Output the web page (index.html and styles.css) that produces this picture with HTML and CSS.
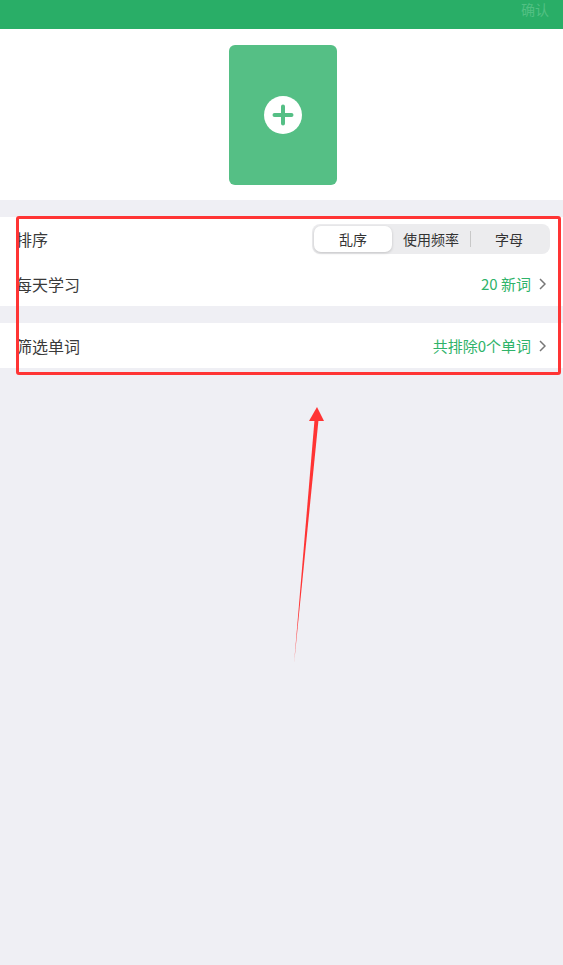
FILE: index.html
```html
<!DOCTYPE html>
<html lang="zh">
<head>
  <meta charset="UTF-8">
  <title>学习设置</title>
  <meta name="viewport" content="width=device-width, initial-scale=1">
  <link rel="stylesheet" href="styles.css">
</head>
<body>
  <header class="topbar">
    <span class="confirm">确认</span>
  </header>

  <div class="cover-area">
    <div class="cover">
      <svg class="add-icon" width="38" height="38" viewBox="0 0 38 38">
        <circle cx="19" cy="19" r="19" fill="#fff"/>
        <path d="M19 10.5v17M10.5 19h17" stroke="#55bf85" stroke-width="4" stroke-linecap="round"/>
      </svg>
    </div>
  </div>

  <div class="settings">
    <div class="group">
      <div class="row">
        <span class="label">排序</span>
        <div class="segmented">
          <span class="seg active">乱序</span>
          <span class="seg">使用频率</span>
          <span class="seg divided">字母</span>
        </div>
      </div>
      <div class="row">
        <span class="label">每天学习</span>
        <span class="value">20 新词
          <svg class="chev" width="7" height="12" viewBox="0 0 7 12"><path d="M1 1l5 5-5 5" fill="none" stroke="#777" stroke-width="1.5"/></svg>
        </span>
      </div>
    </div>

    <div class="group">
      <div class="row">
        <span class="label">筛选单词</span>
        <span class="value">共排除0个单词
          <svg class="chev" width="7" height="12" viewBox="0 0 7 12"><path d="M1 1l5 5-5 5" fill="none" stroke="#777" stroke-width="1.5"/></svg>
        </span>
      </div>
    </div>

    <div class="highlight"></div>
  </div>

  <!-- annotation arrow -->
  <svg class="arrow" width="563" height="965" viewBox="0 0 563 965">
    <path d="M294 664 L314.5 420 L318.5 420 Z" fill="#ff3434"/>
    <path d="M309 421 L317 407 L324 421 Z" fill="#ff3434"/>
  </svg>
</body>
</html>
```

FILE: styles.css
```css
html, body {
  margin: 0;
  padding: 0;
}

body {
  font-family: "Noto Sans CJK SC", "Noto Sans", sans-serif;
  background: #efeff4;
  color: #3a3a3a;
  width: 563px;
  height: 965px;
  position: relative;
  overflow: hidden;
}

.topbar {
  height: 29px;
  background: #29ae67;
  display: flex;
  justify-content: flex-end;
  align-items: flex-start;
  padding-right: 14px;
}

.confirm {
  font-size: 14px;
  line-height: 16px;
  margin-top: 1px;
  color: #52c083;
}

.cover-area {
  background: #fff;
  height: 171px;
  display: flex;
  justify-content: center;
  padding-top: 16px;
  box-sizing: border-box;
}

.cover {
  width: 108px;
  height: 140px;
  background: #55bf85;
  border-radius: 6px;
  display: flex;
  align-items: center;
  justify-content: center;
  margin-left: 2px;
}

.add-icon {
  margin-top: -1px;
}

.settings {
  position: relative;
  padding-top: 17px;
}

.group {
  background: #fff;
  margin-bottom: 17px;
}

.row {
  height: 45px;
  display: flex;
  align-items: center;
  justify-content: space-between;
  padding: 0 17px 0 16px;
}

.group:first-child .row:first-child {
  height: 44px;
}

.group:last-of-type .row {
  height: 45px;
  padding-bottom: 2px;
  box-sizing: border-box;
}

.label {
  font-size: 16px;
}

.value {
  font-size: 15px;
  color: #2fb36a;
  display: flex;
  align-items: center;
}

.chev {
  margin-left: 8px;
}

.segmented {
  display: flex;
  align-items: center;
  background: #ececee;
  border-radius: 8px;
  padding: 2px;
  margin-right: -4px;
  height: 26px;
}

.seg {
  width: 78px;
  height: 26px;
  display: flex;
  align-items: center;
  justify-content: center;
  font-size: 14px;
  color: #333;
  position: relative;
}

.seg.active {
  background: #fff;
  border-radius: 7px;
  box-shadow: 0 1px 3px rgba(0, 0, 0, 0.18);
}

.seg.divided::before {
  content: "";
  position: absolute;
  left: 0;
  top: 5px;
  height: 16px;
  border-left: 1px solid #c8c8c8;
}

.highlight {
  position: absolute;
  left: 16px;
  top: 16px;
  width: 539px;
  height: 153px;
  border: 3px solid #ff3434;
  border-radius: 3px;
  pointer-events: none;
}

.arrow {
  position: absolute;
  left: 0;
  top: 0;
  pointer-events: none;
}
```
